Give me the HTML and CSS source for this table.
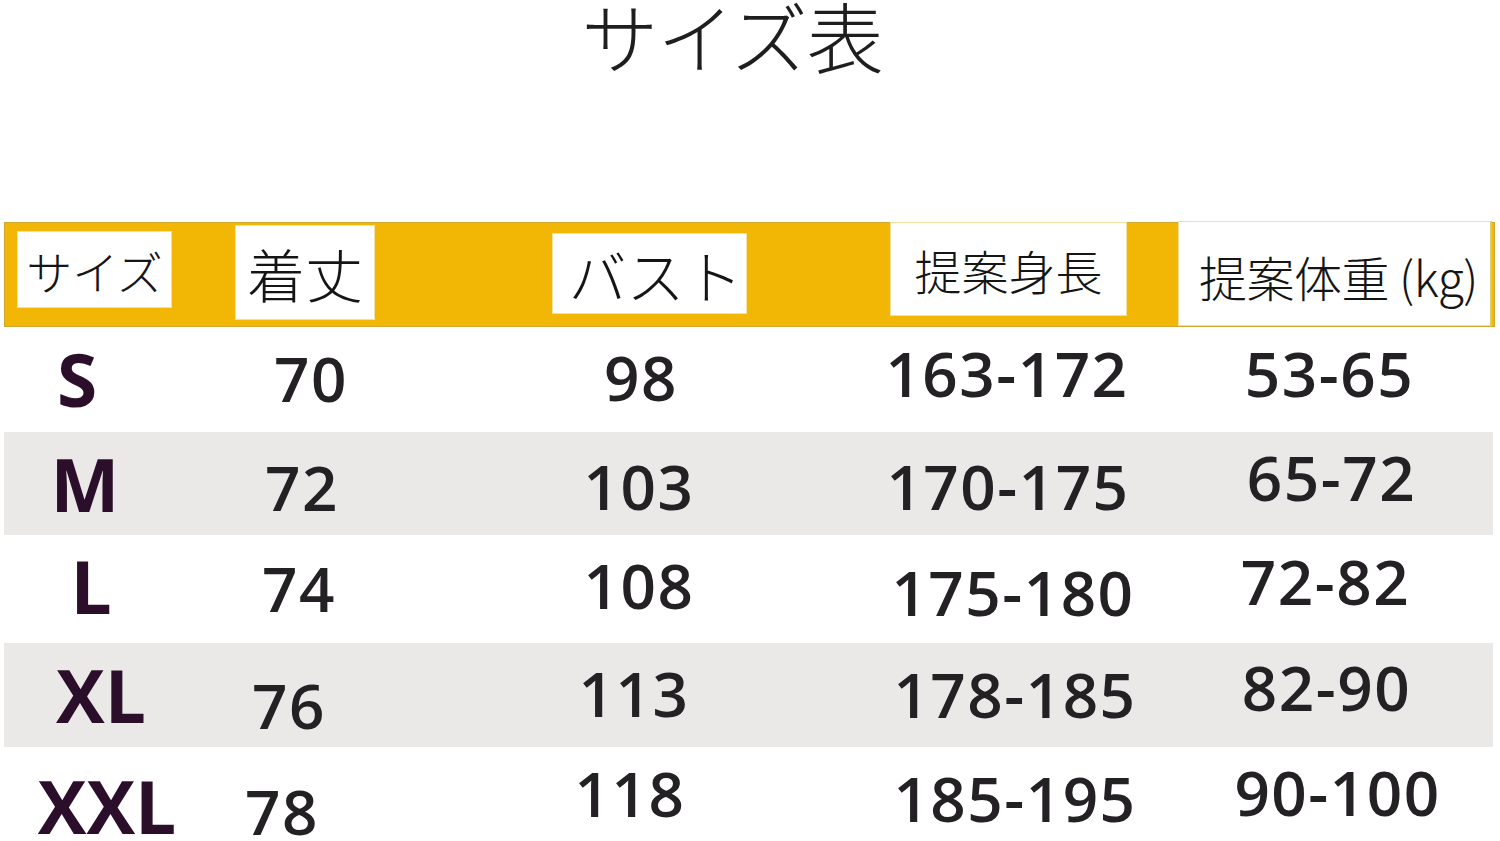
FILE: index.html
```html
<!DOCTYPE html>
<html lang="ja">
<head>
<meta charset="utf-8">
<title>サイズ表</title>
<link rel="stylesheet" href="styles.css">
</head>
<body>
<div class="page">
  <h1 class="title">サイズ表</h1>
  <div class="head">
    <div class="hbox hb1"><span>サイズ</span></div>
    <div class="hbox hb2"><span>着丈</span></div>
    <div class="hbox hb3"><span>バスト</span></div>
    <div class="hbox hb4"><span>提案身長</span></div>
    <div class="hbox hb5"><span>提案体重 (kg)</span></div>
  </div>
  <div class="table">
    <div class="row r-s">
      <div class="cell size">S</div><div class="cell num">70</div><div class="cell num">98</div><div class="cell num">163-172</div><div class="cell num">53-65</div>
    </div>
    <div class="row r-m alt">
      <div class="cell size">M</div><div class="cell num">72</div><div class="cell num">103</div><div class="cell num">170-175</div><div class="cell num">65-72</div>
    </div>
    <div class="row r-l">
      <div class="cell size">L</div><div class="cell num">74</div><div class="cell num">108</div><div class="cell num">175-180</div><div class="cell num">72-82</div>
    </div>
    <div class="row r-xl alt">
      <div class="cell size">XL</div><div class="cell num">76</div><div class="cell num">113</div><div class="cell num">178-185</div><div class="cell num">82-90</div>
    </div>
    <div class="row r-xxl">
      <div class="cell size">XXL</div><div class="cell num">78</div><div class="cell num">118</div><div class="cell num">185-195</div><div class="cell num">90-100</div>
    </div>
  </div>
</div>
</body>
</html>
```

FILE: styles.css
```css
html, body {
  margin: 0;
  padding: 0;
  background: #ffffff;
}

.page {
  width: 1500px;
  height: 841px;
  overflow: hidden;
  background: #ffffff;
}

.title {
  margin: 0;
  height: 222px;
  box-sizing: border-box;
  padding-top: 0;
  padding-right: 36px;
  text-align: center;
  font-family: "Noto Sans CJK JP", sans-serif;
  font-weight: 300;
  font-size: 77px;
  line-height: 0.92;
  color: #1e1e1e;
  letter-spacing: -1px;
}

/* header bar */
.head {
  margin-left: 4px;
  width: 1491px;
  height: 105px;
  box-sizing: border-box;
  border: 1px solid #d0a82e;
  background: #f2b705;
  display: flex;
  align-items: flex-start;
}

.hbox {
  flex: none;
  box-sizing: border-box;
  background: #ffffff;
  border: 1px solid #f1e2a4;
  display: flex;
  align-items: center;
  justify-content: center;
  font-family: "Noto Sans CJK JP", sans-serif;
  font-weight: 300;
  color: #151515;
  line-height: 1;
  white-space: nowrap;
}

.hb1 { margin-left: 12px; margin-top: 8px; width: 155px; height: 77px; font-size: 46px; }
.hb2 { margin-left: 63px; margin-top: 2px; width: 140px; height: 95px; font-size: 58px; }
.hb3 { margin-left: 177px; margin-top: 10px; width: 195px; height: 81px; font-size: 58px; padding-left: 12px; }
.hb4 { margin-left: 143px; margin-top: -1px; width: 237px; height: 94px; font-size: 47px; }
.hb5 { margin-left: 51px; margin-top: -2px; width: 314px; height: 105px; font-size: 48px; border-right: 2px solid #d9c870; padding-top: 4px; justify-content: flex-start; padding-left: 20px; letter-spacing: -0.5px; }

/* table body */
.table {
  margin-left: 4px;
  width: 1489px;
}

.row {
  display: grid;
  grid-template-columns: 172px 242px 438px 312px 1fr;
}

.row.alt { background: #ebe9e8; }

.r-s { height: 105px; }
.r-m { height: 103px; }
.r-l { height: 108px; }
.r-xl { height: 104px; }
.r-xxl { height: 94px; }

.cell {
  display: flex;
  align-items: center;
  justify-content: center;
  line-height: 0.8;
  white-space: nowrap;
  font-family: "Open Sans", "Noto Sans", sans-serif;
}

.size {
  font-size: 73px;
  font-weight: 700;
  color: #2b0e29;
}

.num {
  font-size: 62px;
  font-weight: 600;
  color: #242124;
  letter-spacing: 1.5px;
}

/* per-row nudges, following the hand-placed source graphic */
.r-s .cell:nth-child(1) { transform: translate(-13px, 0px); }
.r-s .cell:nth-child(2) { transform: translate(14px, -1px); }
.r-s .cell:nth-child(3) { transform: translate(4px, -2px); }
.r-s .cell:nth-child(4) { transform: translate(-5px, -6px); }
.r-s .cell:nth-child(5) { transform: translate(-1px, -6px); }

.r-m .cell:nth-child(1) { transform: translate(-5px, 1px); }
.r-m .cell:nth-child(2) { transform: translate(5px, 4px); }
.r-m .cell:nth-child(3) { transform: translate(2px, 3px); }
.r-m .cell:nth-child(4) { transform: translate(-4px, 3px); }
.r-m .cell:nth-child(5) { transform: translate(1px, -6px); }

.r-l .cell:nth-child(1) { transform: translate(1px, -3px); }
.r-l .cell:nth-child(2) { transform: translate(2px, 0px); }
.r-l .cell:nth-child(3) { transform: translate(2px, -3px); }
.r-l .cell:nth-child(4) { transform: translate(1px, 4px); }
.r-l .cell:nth-child(5) { transform: translate(-5px, -7px); }

.r-xl .cell:nth-child(1) { transform: translate(11px, 0px); }
.r-xl .cell:nth-child(2) { transform: translate(-8px, 11px); }
.r-xl .cell:nth-child(3) { transform: translate(-3px, -1px); }
.r-xl .cell:nth-child(4) { transform: translate(3px, 0px); }
.r-xl .cell:nth-child(5) { transform: translate(-4px, -7px); }

.r-xxl .cell:nth-child(1) { transform: translate(17px, 12px); }
.r-xxl .cell:nth-child(2) { transform: translate(-15px, 18px); }
.r-xxl .cell:nth-child(3) { transform: translate(-7px, 0px); }
.r-xxl .cell:nth-child(4) { transform: translate(3px, 5px); }
.r-xxl .cell:nth-child(5) { transform: translate(7px, -1px); }
```
